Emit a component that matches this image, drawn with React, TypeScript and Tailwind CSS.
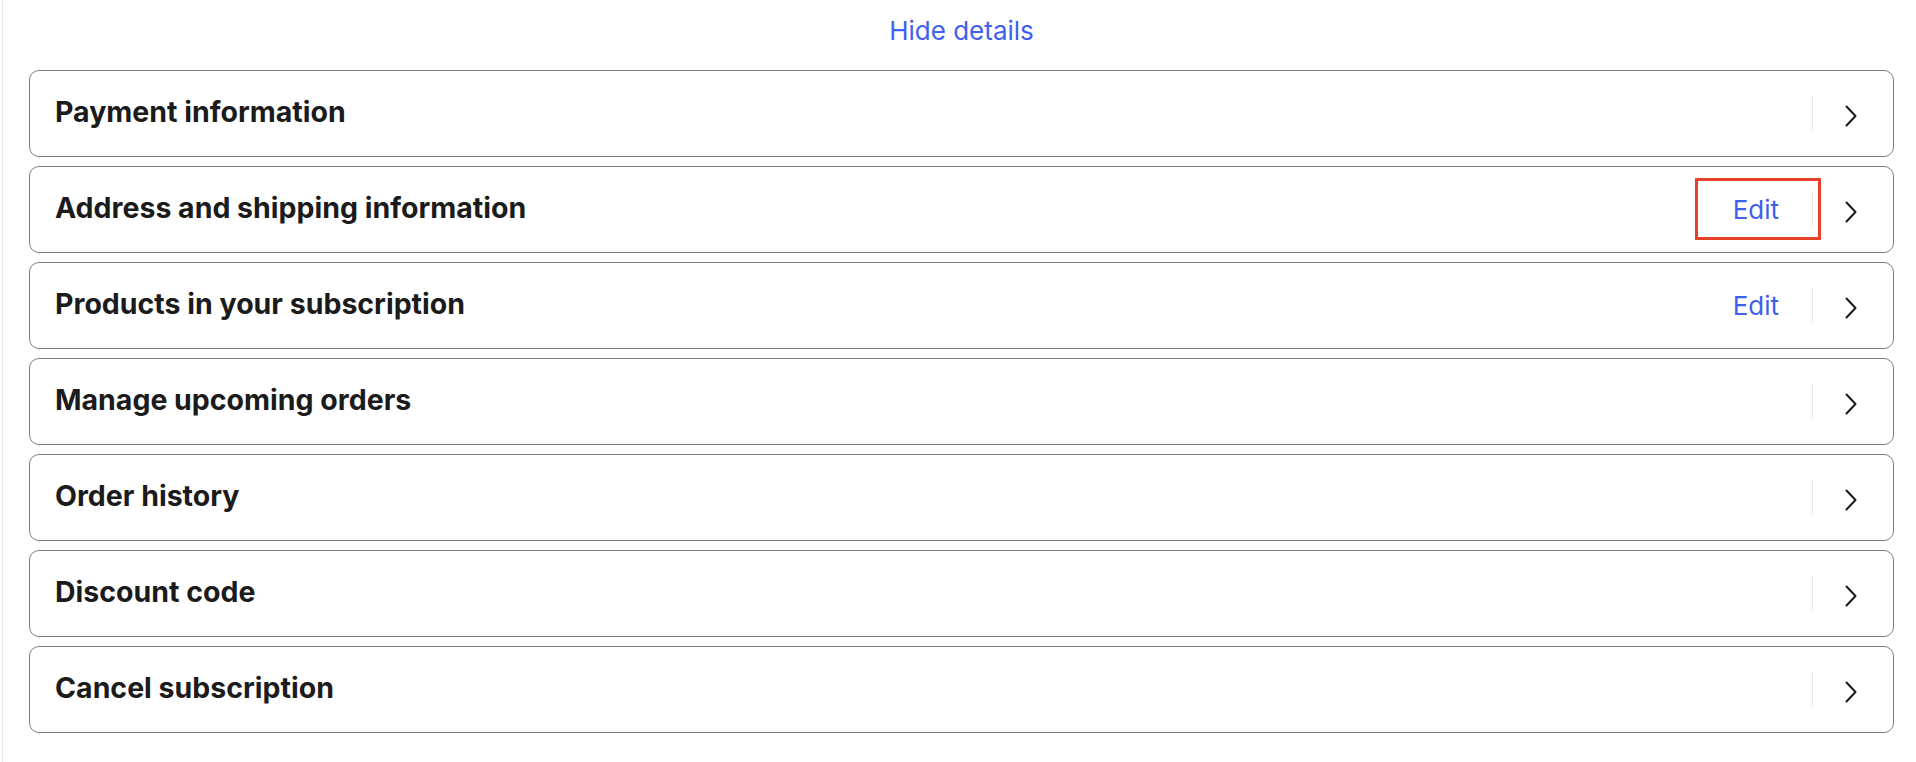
import React from "react";

type Section = {
  title: string;
  editable?: boolean;
  highlighted?: boolean;
};

const sections: Section[] = [
  { title: "Payment information" },
  { title: "Address and shipping information", editable: true, highlighted: true },
  { title: "Products in your subscription", editable: true },
  { title: "Manage upcoming orders" },
  { title: "Order history" },
  { title: "Discount code" },
  { title: "Cancel subscription" },
];

function Chevron() {
  return (
    <svg width="12" height="22" viewBox="0 0 12 22" fill="none" aria-hidden="true">
      <path
        d="M1.5 1.5 L10.5 11 L1.5 20.5"
        stroke="#1a1a1a"
        strokeWidth="2"
        strokeLinecap="round"
        strokeLinejoin="round"
      />
    </svg>
  );
}

function SectionRow({ section }: { section: Section }) {
  return (
    <div className="flex h-[87px] items-center justify-between rounded-[10px] border border-[#7c8085] bg-white pl-[25px] pr-[36px]">
      <h3 className="-translate-y-[1px] text-[28.5px] font-bold leading-none text-[#1b1b1b]">
        {section.title}
      </h3>
      <div className="flex items-center">
        {section.editable && (
          <button className="relative mr-[33px] h-[32px] text-[26px] leading-[32px] text-[#4060f0]">
            Edit
            {section.highlighted && (
              <span className="pointer-events-none absolute -bottom-[14px] -left-[38px] -right-[42px] -top-[16px] border-[3px] border-[#e8412a]" />
            )}
          </button>
        )}
        <div className="h-[35px] w-px bg-[#e6e6e6]" />
        <div className="ml-[32px] flex translate-y-[2px] items-center">
          <Chevron />
        </div>
      </div>
    </div>
  );
}

export default function App() {
  return (
    <div
      className="min-h-[762px] bg-white pl-[2px]"
      style={{ fontFamily: "Inter, 'Liberation Sans', sans-serif" }}
    >
      <div className="min-h-[762px] border-l border-[#e6e6e6] pl-[26px] pr-[22px]">
        <div className="flex justify-center pt-[15px]">
          <button className="h-[32px] text-[26px] leading-[32px] text-[#4060f0]">
            Hide details
          </button>
        </div>
        <div className="mt-[23px] flex flex-col gap-[9px]">
          {sections.map((section) => (
            <SectionRow key={section.title} section={section} />
          ))}
        </div>
      </div>
    </div>
  );
}
